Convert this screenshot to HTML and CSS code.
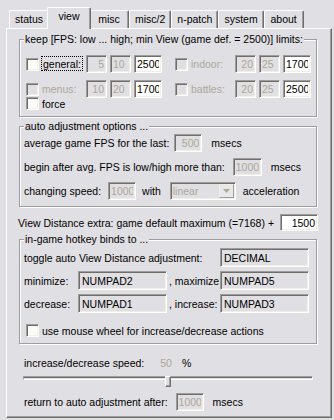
FILE: index.html
```html
<!DOCTYPE html>
<html lang="en">
  <head>
    <meta charset="UTF-8" />
    <meta name="viewport" content="width=device-width, initial-scale=1.0" />
    <title>View settings</title>
    <link rel="stylesheet" href="styles.css">
  </head>
  <body>
    <div class="tabs">
      <span class="tab">status</span>
      <span class="tab active">view</span>
      <span class="tab">misc</span>
      <span class="tab">misc/2</span>
      <span class="tab">n-patch</span>
      <span class="tab">system</span>
      <span class="tab">about</span>
    </div>

    <div class="panel">
      <!-- FPS / view distance limits -->
      <fieldset class="group keep">
        <legend>keep [FPS: low ... high; min View (game def. = 2500)] limits:</legend>
        <div class="limits">
          <div class="limit">
            <input type="checkbox" class="check">
            <label class="limit-name"><span class="focus">general:</span></label>
            <input class="field lo" value="5" disabled>
            <input class="field hi" value="10" disabled>
            <input class="field min" value="2500">
          </div>
          <div class="limit off">
            <input type="checkbox" class="check" disabled>
            <label class="limit-name">indoor:</label>
            <input class="field lo" value="20" disabled>
            <input class="field hi" value="25" disabled>
            <input class="field min" value="1700">
          </div>
          <div class="limit off">
            <input type="checkbox" class="check" disabled>
            <label class="limit-name">menus:</label>
            <input class="field lo" value="10" disabled>
            <input class="field hi" value="20" disabled>
            <input class="field min" value="1700">
          </div>
          <div class="limit off">
            <input type="checkbox" class="check" disabled>
            <label class="limit-name">battles:</label>
            <input class="field lo" value="20" disabled>
            <input class="field hi" value="25" disabled>
            <input class="field min" value="2500">
          </div>
        </div>
        <div class="force">
          <input type="checkbox" class="check">
          <label>force</label>
        </div>
      </fieldset>

      <!-- auto adjustment -->
      <fieldset class="group auto">
        <legend>auto adjustment options ...</legend>
        <div class="line">
          <span>average game FPS for the last:</span>
          <input class="field num gap-5" value="500" disabled>
          <span class="unit">msecs</span>
        </div>
        <div class="line">
          <span>begin after avg. FPS is low/high more than:</span>
          <input class="field num wide-num gap-8" value="1000" disabled>
          <span class="unit">msecs</span>
        </div>
        <div class="line">
          <span>changing speed:</span>
          <input class="field num gap-7" value="1000" disabled>
          <span class="with">with</span>
          <span class="select">
            <span class="select-text">linear</span>
            <span class="select-btn">
              <svg width="7" height="4" viewBox="0 0 7 4"><path d="M0 0h7L3.5 4z" fill="#aca899"/></svg>
            </span>
          </span>
          <span class="accel">acceleration</span>
        </div>
      </fieldset>

      <div class="extra">
        <span>View Distance extra: game default maximum (=7168) +</span>
        <input class="field" value="1500">
      </div>

      <!-- hotkeys -->
      <fieldset class="group hotkeys">
        <legend>in-game hotkey binds to ...</legend>
        <div class="keys">
          <span class="wide">toggle auto View Distance adjustment:</span>
          <input class="field key" value="DECIMAL" readonly>
          <span>minimize:</span>
          <input class="field key" value="NUMPAD2" readonly>
          <span class="comma">, maximize:</span>
          <input class="field key" value="NUMPAD5" readonly>
          <span>decrease:</span>
          <input class="field key" value="NUMPAD1" readonly>
          <span class="comma">, increase:</span>
          <input class="field key" value="NUMPAD3" readonly>
        </div>
        <div class="wheel">
          <input type="checkbox" class="check">
          <label>use mouse wheel for increase/decrease actions</label>
        </div>
      </fieldset>

      <div class="speed">
        <span>increase/decrease speed:</span>
        <span class="speed-value">50</span>
        <span class="pct">%</span>
      </div>
      <div class="slider">
        <div class="slider-track"></div>
        <div class="slider-thumb" style="left: 50%"></div>
      </div>
      <div class="line back">
        <span>return to auto adjustment after:</span>
        <input class="field num gap-8" value="1000" disabled>
        <span class="unit">msecs</span>
      </div>
    </div>
  </body>
</html>
```

FILE: styles.css
```css
* {
  box-sizing: border-box;
}

body {
  margin: 0;
  width: 334px;
  height: 420px;
  overflow: hidden;
  background: #e0dfe3;
  color: #000;
  font-family: "Liberation Sans", Arial, sans-serif;
  font-size: 10.5px;
}

input {
  font: inherit;
  margin: 0;
}

/* tab strip */
.tabs {
  display: flex;
  align-items: flex-end;
  height: 28px;
  padding-left: 9px;
}

.tab {
  min-width: 40px;
  height: 18px;
  padding: 0 5px;
  line-height: 16px;
  text-align: center;
  border: 1px solid #fff;
  border-right-color: #716f64;
  border-bottom: 0;
  border-radius: 2px 2px 0 0;
  box-shadow: inset -1px 0 #9d9da1;
}

.tab.active {
  position: relative;
  z-index: 1;
  min-width: 44px;
  height: 22px;
  margin: 0 -2px -1px;
  padding: 0 7px;
  line-height: 17px;
  background: #e0dfe3;
}

.panel {
  width: 326px;
  height: 390px;
  margin-left: 6px;
  padding: 4px 0 0 12px;
  border: 1px solid #fff;
  border-right-color: #716f64;
  border-bottom-color: #716f64;
  box-shadow: inset -1px -1px #9d9da1;
}

/* group boxes */
.group {
  width: 298px;
  margin: 0;
  padding: 0 0 0 4px;
  border: 1px solid #9d9da1;
  box-shadow: inset 1px 1px #fff, 1px 1px #fff;
}

.group legend {
  padding: 0 1px;
  line-height: 13px;
  white-space: nowrap;
  background: #e0dfe3;
}

/* sunken edit boxes */
.field {
  height: 18px;
  padding: 0 2px;
  border: 1px solid;
  border-color: #9d9da1 #fff #fff #9d9da1;
  box-shadow: inset 1px 1px #716f64, inset -1px -1px #f1efe2;
  background: #fff;
  color: #000;
  text-align: right;
  outline: none;
}

.field:disabled,
.field[readonly] {
  background: #e0dfe3;
}

.field:disabled {
  color: #aca899;
}

.check {
  appearance: none;
  width: 13px;
  height: 13px;
  margin: 0 3px 0 0;
  border: 1px solid;
  border-color: #9d9da1 #fff #fff #9d9da1;
  box-shadow: inset 1px 1px #716f64, inset -1px -1px #f1efe2;
  background: #fcfcfa;
}

.check:disabled {
  background: #e0dfe3;
}

/* keep limits */
.limits {
  display: grid;
  grid-template-columns: 149px 1fr;
  row-gap: 7px;
  margin-top: 9px;
  padding-left: 2px;
}

.limit {
  display: flex;
  align-items: center;
  height: 18px;
}

.limit-name {
  width: 44px;
}

.off .limit-name {
  color: #aca899;
}

.focus {
  padding: 1px 1px 0;
  outline: 1px dotted #000;
}

.lo,
.hi {
  width: 21px;
  margin-right: 3px;
}

.hi {
  text-align: left;
}

.min {
  width: 28px;
}

.force {
  display: flex;
  align-items: center;
  height: 13px;
  margin: -1px 0 6px;
  padding-left: 2px;
}

/* auto adjustment */
.auto {
  margin-top: 3px;
  padding-top: 1px;
  padding-bottom: 6px;
}

.line {
  display: flex;
  align-items: center;
  height: 18px;
  white-space: nowrap;
}

.line + .line {
  margin-top: 6px;
}

.num {
  width: 28px;
}

.wide-num {
  width: 29px;
}

.gap-5 { margin-left: 5px; }
.gap-7 { margin-left: 7px; }
.gap-8 { margin-left: 8px; }

.unit {
  margin-left: 9px;
}

.with {
  margin-left: 6px;
}

.select {
  display: flex;
  align-items: center;
  width: 66px;
  height: 18px;
  margin-left: 9px;
  padding: 2px;
  border: 1px solid;
  border-color: #9d9da1 #fff #fff #9d9da1;
  box-shadow: inset 1px 1px #716f64, inset -1px -1px #f1efe2;
  color: #aca899;
}

.select-text {
  flex: 1;
}

.select-btn {
  display: flex;
  align-items: center;
  justify-content: center;
  width: 15px;
  height: 14px;
  margin-right: -1px;
  border: 1px solid;
  border-color: #f1efe2 #9d9da1 #9d9da1 #f1efe2;
  background: #e8e7ea;
}

.accel {
  margin-left: 7px;
}

.extra {
  display: flex;
  align-items: center;
  height: 17px;
  margin: 7px 0 0 -1px;
  white-space: nowrap;
}

.extra .field {
  width: 38px;
  height: 17px;
  margin-left: 6px;
}

/* hotkeys */
.hotkeys {
  margin-top: 2px;
  padding-top: 2px;
  padding-bottom: 6px;
}

.keys {
  display: grid;
  grid-template-columns: 54px 89px 53px 89px;
  grid-auto-rows: 19px;
  row-gap: 4px;
  align-items: center;
  white-space: nowrap;
}

.keys .wide {
  grid-column: 1 / 4;
}

.comma {
  padding-left: 2px;
}

.key {
  width: 89px;
  height: 19px;
  padding-left: 3px;
  color: #000;
  text-align: left;
}

.wheel {
  display: flex;
  align-items: center;
  height: 13px;
  margin-top: 11px;
  padding-left: 2px;
}

/* speed slider */
.speed {
  display: flex;
  align-items: center;
  height: 14px;
  margin: 12px 0 0 5px;
}

.speed-value {
  margin-left: 16px;
  color: #aca899;
}

.pct {
  margin-left: 10px;
}

.slider {
  position: relative;
  width: 290px;
  height: 11px;
  margin: 6px 0 0 4px;
}

.slider-track {
  height: 4px;
  margin-top: 3px;
  border: 1px solid;
  border-color: #9d9da1 #fff #fff #9d9da1;
  box-shadow: inset 0 1px #716f64;
}

.slider-thumb {
  position: absolute;
  top: 0;
  width: 6px;
  height: 11px;
  margin-left: -3px;
  border: 1px solid;
  border-color: #fff #716f64 #716f64 #fff;
  box-shadow: inset -1px -1px #9d9da1;
  background: #e0dfe3;
}

.back {
  margin: 6px 0 0 5px;
}
```
